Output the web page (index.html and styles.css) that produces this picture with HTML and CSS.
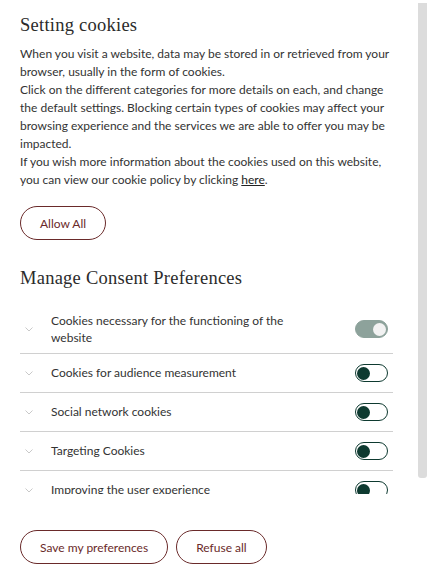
FILE: index.html
```html
<!DOCTYPE html>
<html lang="en">
<head>
<meta charset="utf-8">
<title>Setting cookies</title>
<link rel="stylesheet" href="styles.css">
</head>
<body>
<div class="modal">
  <div class="main">
    <div class="scroll">
      <h2 class="title">Setting cookies</h2>
      <p class="intro">When you visit a website, data may be stored in or retrieved from your browser, usually in the form of cookies.<br>Click on the different categories for more details on each, and change the default settings. Blocking certain types of cookies may affect your browsing experience and the services we are able to offer you may be impacted.<br>If you wish more information about the cookies used on this website, you can view our cookie policy by clicking <a class="link" href="#">here</a>.</p>
      <button class="btn btn-allow">Allow All</button>
      <h2 class="title title-manage">Manage Consent Preferences</h2>
      <ul class="list">
        <li class="row row-first">
          <span class="chev"><svg width="8" height="5" viewBox="0 0 8 5"><path d="M0.5 0.5 L4 4 L7.5 0.5" fill="none" stroke="#c9c9c9" stroke-width="1"/></svg></span>
          <span class="label">Cookies necessary for the functioning of the website</span>
          <span class="toggle toggle-on"><span class="knob"></span></span>
        </li>
        <li class="row">
          <span class="chev"><svg width="8" height="5" viewBox="0 0 8 5"><path d="M0.5 0.5 L4 4 L7.5 0.5" fill="none" stroke="#c9c9c9" stroke-width="1"/></svg></span>
          <span class="label">Cookies for audience measurement</span>
          <span class="toggle"><span class="knob"></span></span>
        </li>
        <li class="row">
          <span class="chev"><svg width="8" height="5" viewBox="0 0 8 5"><path d="M0.5 0.5 L4 4 L7.5 0.5" fill="none" stroke="#c9c9c9" stroke-width="1"/></svg></span>
          <span class="label">Social network cookies</span>
          <span class="toggle"><span class="knob"></span></span>
        </li>
        <li class="row">
          <span class="chev"><svg width="8" height="5" viewBox="0 0 8 5"><path d="M0.5 0.5 L4 4 L7.5 0.5" fill="none" stroke="#c9c9c9" stroke-width="1"/></svg></span>
          <span class="label">Targeting Cookies</span>
          <span class="toggle"><span class="knob"></span></span>
        </li>
        <li class="row">
          <span class="chev"><svg width="8" height="5" viewBox="0 0 8 5"><path d="M0.5 0.5 L4 4 L7.5 0.5" fill="none" stroke="#c9c9c9" stroke-width="1"/></svg></span>
          <span class="label">Improving the user experience</span>
          <span class="toggle"><span class="knob"></span></span>
        </li>
      </ul>
    </div>
    <div class="footer">
      <button class="btn">Save my preferences</button>
      <button class="btn">Refuse all</button>
    </div>
  </div>
  <div class="rail"><div class="thumb"></div></div>
</div>
</body>
</html>
```
FILE: styles.css
```css
html, body {
  margin: 0;
  padding: 0;
  background: #fff;
}
body {
  font-family: Lato, "Liberation Sans", sans-serif;
  color: #333;
}
.modal {
  width: 429px;
  height: 575px;
  display: flex;
}
.main {
  flex: 1;
  display: flex;
  flex-direction: column;
  min-width: 0;
}
.rail {
  width: 11px;
  flex-shrink: 0;
  padding-top: 3px;
  box-sizing: border-box;
}
.thumb {
  width: 9px;
  height: 475px;
  background: #dcdcdc;
  border-radius: 0 0 3px 3px;
}
.scroll {
  height: 494px;
  overflow: hidden;
  padding: 0 25px 0 20px;
  box-sizing: border-box;
  flex-shrink: 0;
}
.title {
  font-family: "Liberation Serif", serif;
  font-weight: 400;
  font-size: 18.5px;
  line-height: 22px;
  color: #2b2b2b;
  margin: 14px 0 0;
  letter-spacing: 0.25px;
}
.intro {
  font-size: 12px;
  line-height: 18px;
  margin: 9px 0 0;
}
.link {
  color: #222;
  text-decoration: underline;
}
.btn {
  font-family: Lato, "Liberation Sans", sans-serif;
  font-size: 12px;
  color: #6a2a2a;
  background: #fff;
  border: 1px solid #6a2a2a;
  border-radius: 17px;
  height: 34px;
  padding: 0 19px;
  cursor: pointer;
}
.btn-allow {
  margin-top: 17px;
}
.title-manage {
  margin-top: 27px;
}
.list {
  list-style: none;
  margin: 13px 0 0;
  padding: 0 0 20px;
}
.row {
  display: flex;
  align-items: center;
  padding: 10px 5px 10px 0;
  border-bottom: 1px solid #d0d0d0;
  font-size: 12px;
  line-height: 18px;
}
.row-first {
  padding-bottom: 7px;
  line-height: 17px;
}
.row:last-child {
  border-bottom: none;
}
.chev {
  width: 31px;
  display: flex;
  justify-content: flex-start;
  padding-left: 5px;
  box-sizing: border-box;
  flex-shrink: 0;
}
.label {
  flex: 1;
  padding-right: 60px;
}
.toggle {
  width: 33px;
  height: 18px;
  box-sizing: border-box;
  border: 1.5px solid #0e3a30;
  border-radius: 9px;
  display: flex;
  align-items: center;
  padding: 0 1px;
  flex-shrink: 0;
}
.knob {
  width: 13px;
  height: 13px;
  border-radius: 50%;
  background: #0e3a30;
}
.toggle-on {
  background: #8da29b;
  border-color: #8da29b;
  justify-content: flex-end;
}
.toggle-on .knob {
  background: #f2f2f2;
}
.footer {
  flex: 1;
  display: flex;
  gap: 8px;
  padding: 36px 0 0 20px;
  align-items: flex-start;
}
```
